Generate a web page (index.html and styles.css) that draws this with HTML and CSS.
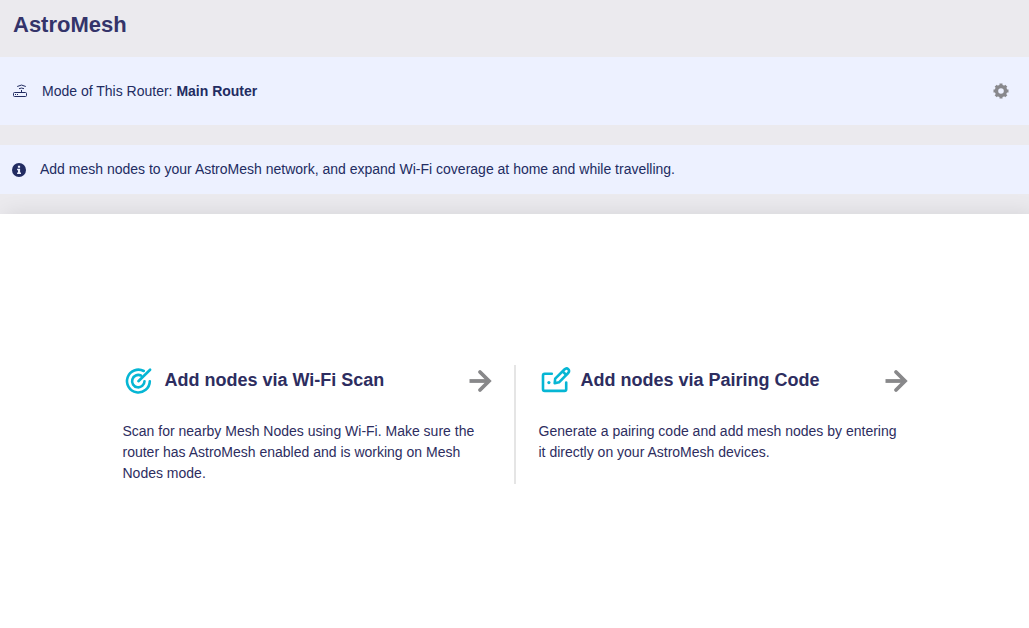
FILE: index.html
```html
<!DOCTYPE html>
<html lang="en">
<head>
  <meta charset="UTF-8">
  <title>AstroMesh</title>
  <link rel="stylesheet" href="styles.css">
</head>
<body>
  <h1>AstroMesh</h1>

  <div class="bar mode-bar">
    <svg class="router-icon" viewBox="0 0 16 14" width="16" height="14">
      <rect x="1.500" y="8.500" width="13" height="4" rx="1"/>
      <path d="M9.500 8V6M5.200 2.500Q9.500-.4 13.800 2.500M7 4.700q2.500-1.300 5 0M3 10.500h1M5 10.500h1"/>
    </svg>
    <span>Mode of This Router: <strong>Main Router</strong></span>
    <svg class="gear-icon" viewBox="0 0 16 16" width="16" height="16">
      <circle cx="8" cy="8" r="4.500"/>
      <path class="teeth" d="M8 .5v2.500M8 13v2.500M.5 8H3M13 8h2.500M2.700 2.700l1.800 1.800M11.500 11.500l1.800 1.800M2.700 13.300l1.800-1.800M11.500 4.500l1.800-1.800"/>
    </svg>
  </div>

  <div class="bar tip-bar">
    <svg class="info-icon" viewBox="0 0 14 14" width="14" height="14">
      <circle cx="7" cy="7" r="7"/>
      <path d="M5.900 2.700h2.200v2H5.900zM5.100 5.700h3v3.700h.9V11H5.100V9.400H6V7.200h-.9z" fill="#edf1ff"/>
    </svg>
    <span>Add mesh nodes to your AstroMesh network, and expand Wi-Fi coverage at home and while travelling.</span>
  </div>

  <div class="content">
    <div class="option">
      <div class="option-head">
        <svg class="option-icon" viewBox="0.5 0 32 32" width="32" height="32">
          <path d="M21.300 6A11.400 11.400 0 1 0 27.300 16.200M18.400 10.500A6.200 6.200 0 1 0 22 16.200M15.900 16.200L27.600 4.700"/>
        </svg>
        <h2>Add nodes via Wi-Fi Scan</h2>
        <svg class="arrow-icon" viewBox="0 0 24 24" width="24" height="24">
          <path d="M1.500 12h19"/>
          <path class="head" d="M12 3L21 12l-9 9"/>
        </svg>
      </div>
      <p>Scan for nearby Mesh Nodes using Wi-Fi. Make sure the router has AstroMesh enabled and is working on Mesh Nodes mode.</p>
    </div>
    <div class="option">
      <div class="option-head">
        <svg class="option-icon" viewBox="0.5 0 32 32" width="32" height="32">
          <path d="M13.300 8.700H6.200Q4.500 8.700 4.500 10.400V24.200Q4.500 25.900 6.200 25.900H26Q27.700 25.900 27.700 24.200V17.500"/>
          <path d="M16.200 18.200L16.700 13.700L25.900 4.500Q28 2.400 29.700 4.100T29.700 8L20.500 17.300zM24.400 6.600l3.400 3.400"/>
          <circle class="dot" cx="10.400" cy="17.600" r="1.600"/>
        </svg>
        <h2>Add nodes via Pairing Code</h2>
        <svg class="arrow-icon" viewBox="0 0 24 24" width="24" height="24">
          <path d="M1.500 12h19"/>
          <path class="head" d="M12 3L21 12l-9 9"/>
        </svg>
      </div>
      <p>Generate a pairing code and add mesh nodes by entering it directly on your AstroMesh devices.</p>
    </div>
  </div>
</body>
</html>
```

FILE: styles.css
```css
* {
  box-sizing: border-box;
}
body {
  margin: 0;
  height: 100vh;
  display: flex;
  flex-direction: column;
  overflow: hidden;
  font-family: "Liberation Sans", Arial, sans-serif;
  font-size: 14px;
  color: #2d2d60;
  background-color: #ebeaee;
}
h1 {
  height: 57px;
  margin: 0;
  padding: 11px 13px;
  font-size: 22px;
  line-height: 28px;
  color: #34346a;
}
.bar {
  display: flex;
  align-items: center;
  margin-bottom: 20px;
  background-color: #edf1ff;
  color: #222c62;
}
.mode-bar {
  height: 68px;
  padding: 0 20px 0 12px;
}
.mode-bar span {
  flex: 1;
  margin-left: 14px;
}
.tip-bar {
  height: 49px;
  padding-left: 12px;
}
.tip-bar span {
  margin: 0 0 2px 14px;
}
.router-icon {
  fill: none;
  stroke: #222c62;
  stroke-width: 1;
}
.gear-icon {
  fill: none;
  stroke: #88888c;
  stroke-width: 3.4;
}
.gear-icon .teeth {
  stroke-width: 3;
}
.info-icon {
  fill: #222c62;
}
.content {
  flex: 1;
  display: flex;
  justify-content: center;
  align-items: flex-start;
  padding-top: 151px;
  background-color: #fff;
  box-shadow: 5px 0 20px rgba(0, 0, 0, 0.1);
}
.option {
  width: 416px;
  height: 119px;
  padding: 0 24px;
}
.option + .option {
  width: 417px;
  margin-left: -1px;
  padding-left: 23px;
  border-left: 2px solid #e5e5e5;
}
.option-head {
  display: flex;
  align-items: center;
  height: 32px;
}
.option-icon {
  fill: none;
  stroke: #06b6d4;
  stroke-width: 2.6;
  stroke-linecap: round;
  stroke-linejoin: round;
}
.option-icon .dot {
  fill: #06b6d4;
  stroke: none;
}
h2 {
  flex: 1;
  margin: 0 0 2px 10px;
  font-size: 18px;
  line-height: 24px;
}
.arrow-icon {
  margin-right: -1px;
  fill: none;
  stroke: #88888a;
  stroke-width: 3.8;
}
.arrow-icon .head {
  stroke-linecap: round;
}
.option p {
  width: 365px;
  margin: 24px 0 0;
  line-height: 21px;
}
```
